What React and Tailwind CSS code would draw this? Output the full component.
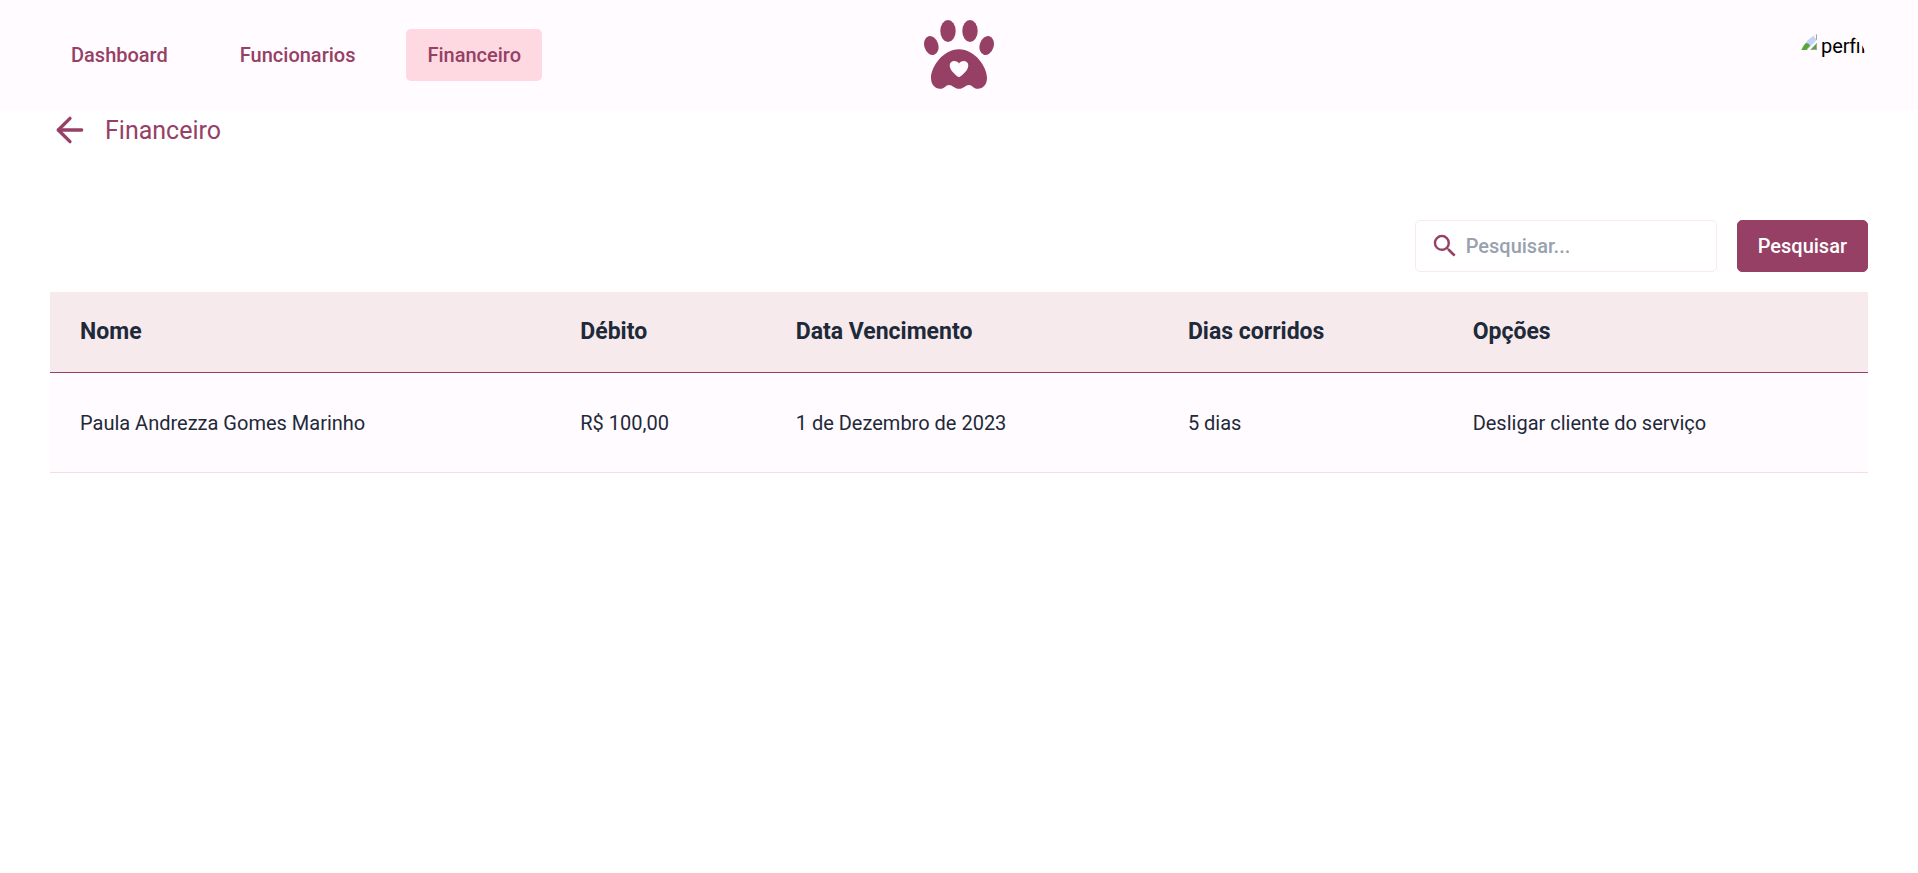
import { ArrowLeft } from "lucide-react";
import { MdSearch } from "react-icons/md";

const links = [
  { label: "Dashboard", href: "#dashboard" },
  { label: "Funcionarios", href: "#funcionarios" },
  { label: "Financeiro", href: "#financeiro", active: true },
];

const columns = ["Nome", "Débito", "Data Vencimento", "Dias corridos", "Opções"];

const rows = [
  ["Paula Andrezza Gomes Marinho", "R$ 100,00", "1 de Dezembro de 2023", "5 dias", "Desligar cliente do serviço"],
];

function PawLogo() {
  return (
    <svg viewBox="0 0 70 70" className="my-2.5 size-[70px] text-[#964066]" fill="currentColor" role="img" aria-label="Logo">
      <ellipse cx="24" cy="11" rx="7.7" ry="11" />
      <ellipse cx="46" cy="11" rx="7.7" ry="11" />
      <ellipse cx="7.3" cy="25.5" rx="7" ry="9.7" transform="rotate(-17 7.3 25.5)" />
      <ellipse cx="62.7" cy="25.5" rx="7" ry="9.7" transform="rotate(17 62.7 25.5)" />
      <path
        fillRule="evenodd"
        d="M35 29.3C51 29.3 63 47 63 58C63 64.500 59 68.800 54 68.800C49 68.800 48.500 65 45 65C41.500 65 39.500 68.800 35 68.800C30.500 68.800 28.500 65 25 65C21.500 65 21 68.800 16 68.800C11 68.800 7 64.500 7 58C7 47 19 29.300 35 29.300ZM35 57.300C38 55.500 44.300 50.500 44.300 45.500C44.300 42.500 42.300 41 39.800 41C37.500 41 35.800 42 35 43.500C34.200 42 32.500 41 30.200 41C27.700 41 25.700 42.500 25.700 45.500C25.700 50.500 32 55.500 35 57.300Z"
      />
    </svg>
  );
}

function BrokenImage() {
  return (
    <svg viewBox="0 0 16 16" className="mt-0.5 size-4 shrink-0" aria-hidden="true">
      <path d="M0 0H16V16H0Z" fill="#a3a3a3" />
      <path d="M1 1H11L15 5V15H1Z" fill="#c3d4f5" />
      <path d="M11 1L15 1V5Z" fill="#ffffff" />
      <path d="M0 16V11L4 8.500L8 10L9 12L5 16Z" fill="#57a63a" />
      <path d="M10 15L15 10V15Z" fill="#57a63a" />
      <path d="M6 16L16 5.500V8.500L9 16Z" fill="#fffbff" />
    </svg>
  );
}

export default function App() {
  return (
    <div className="min-h-screen bg-white font-['Roboto',sans-serif] text-xl text-gray-800">
      <header className="grid grid-cols-[1fr_auto_1fr] items-center bg-[#fffbff] px-[50px] py-2.5">
        <nav className="flex gap-[30px]">
          {links.map((link) => (
            <a
              key={link.label}
              href={link.href}
              aria-current={link.active ? "page" : undefined}
              className={`rounded-[5px] border border-transparent px-5 py-[11px] font-medium text-[#964066] ${link.active ? "bg-[#ffd9e2]" : ""}`}
            >
              {link.label}
            </a>
          ))}
        </nav>
        <PawLogo />
        <div className="flex size-[70px] items-start gap-1 self-end justify-self-end overflow-hidden rounded-full pt-0.5 pl-[3px] text-black">
          <BrokenImage />
          <span>perfil</span>
        </div>
      </header>

      <main className="px-[50px]">
        <div className="flex items-center gap-[15px] text-[#964066]">
          <a href="#voltar" aria-label="Voltar">
            <ArrowLeft size={40} />
          </a>
          <h1 className="text-[25px]">Financeiro</h1>
        </div>

        <form className="mt-[70px] flex justify-end gap-5" onSubmit={(e) => e.preventDefault()}>
          <label className="flex h-[52px] w-[302px] items-center gap-1.5 rounded-[5px] border border-[#f7eaec] px-3.5">
            <MdSearch className="size-[30px] shrink-0 text-[#964066]" />
            <input
              type="text"
              aria-label="Pesquisar"
              placeholder="Pesquisar..."
              className="w-full min-w-0 font-medium outline-none placeholder:text-gray-400"
            />
          </label>
          <button type="submit" className="rounded-[5px] border border-[#964066] bg-[#964066] px-5 font-medium text-white">
            Pesquisar
          </button>
        </form>

        <table className="mt-5 w-full border-separate border-spacing-0 text-left">
          <thead>
            <tr className="bg-[#f7eaec]">
              {columns.map((column) => (
                <th key={column} scope="col" className="h-[81px] border-b border-[#964066] px-[30px] text-[23px] leading-7 font-bold">
                  {column}
                </th>
              ))}
            </tr>
          </thead>
          <tbody>
            {rows.map((row) => (
              <tr key={row[0]} className="bg-[#fffbff]">
                {row.map((cell) => (
                  <td key={cell} className="h-[100px] border-b border-[#ffd9e2] px-[30px]">
                    {cell}
                  </td>
                ))}
              </tr>
            ))}
          </tbody>
        </table>
      </main>
    </div>
  );
}
